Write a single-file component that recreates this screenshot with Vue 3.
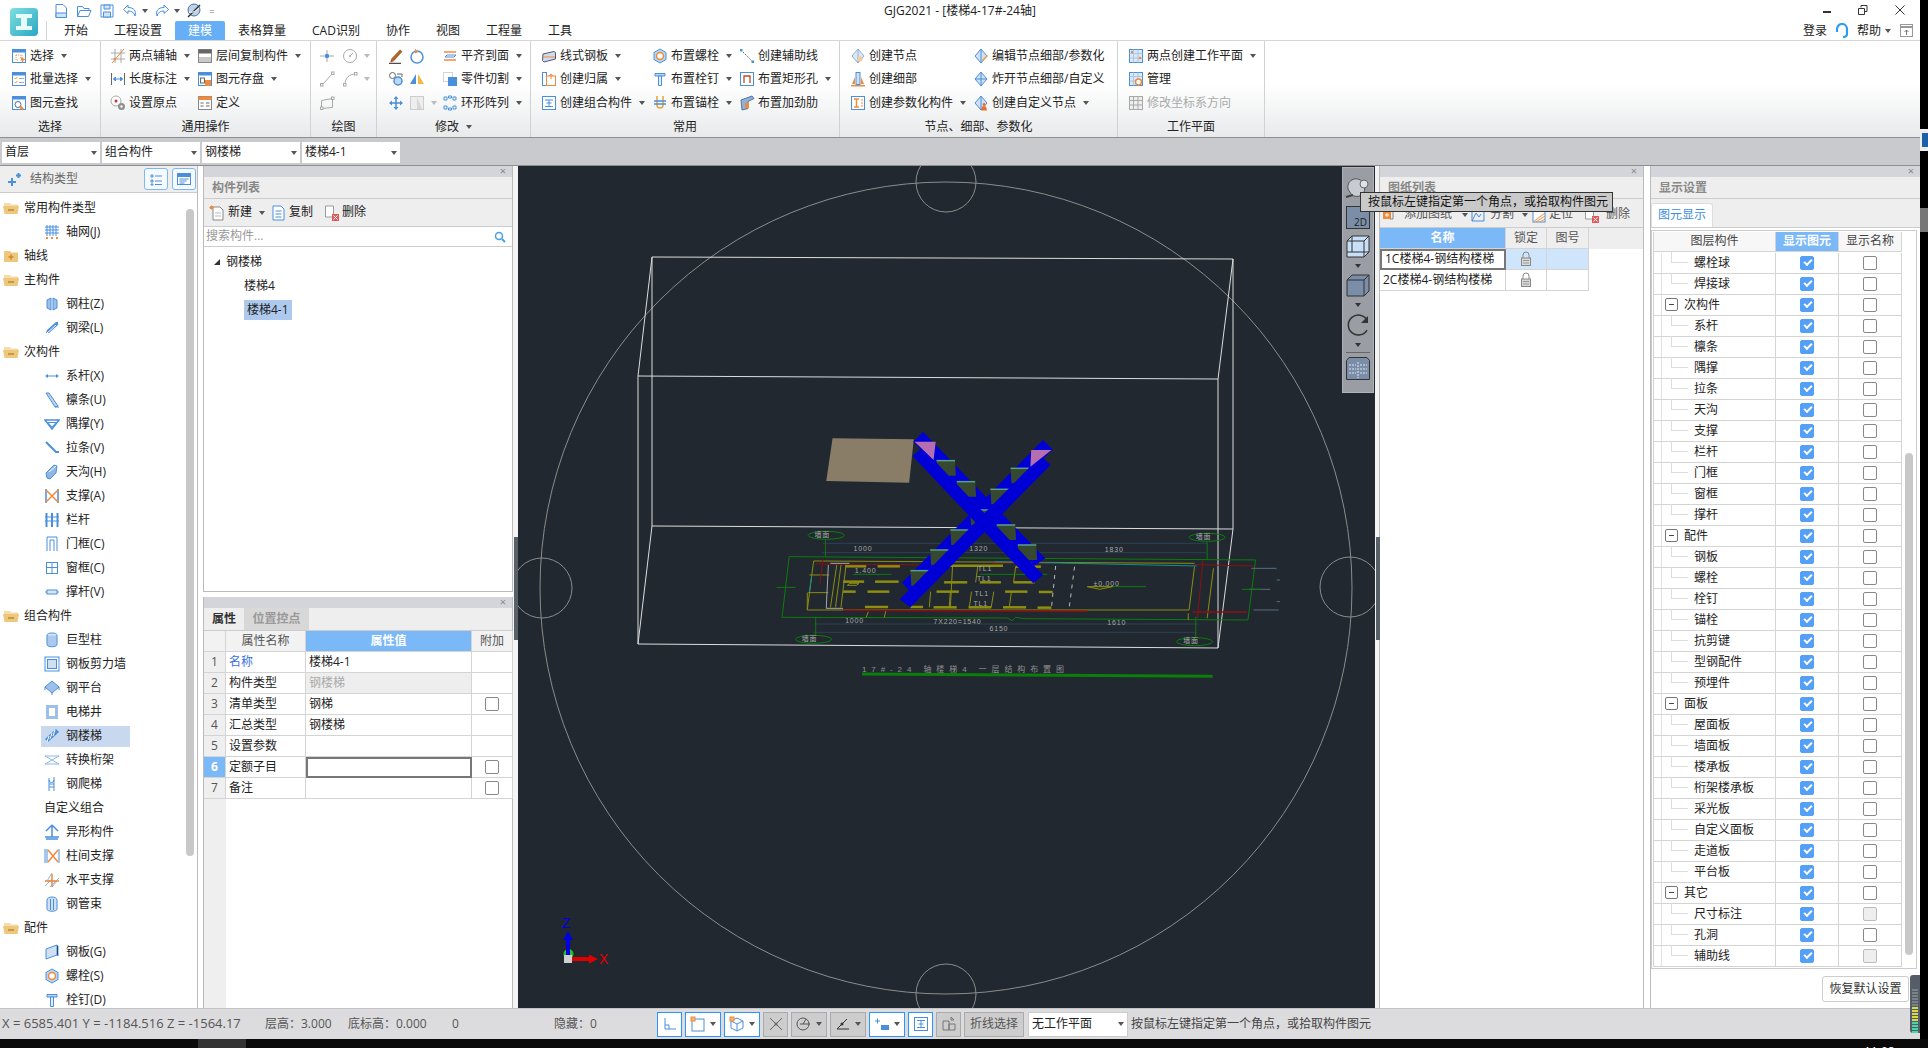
<script setup>
const B = '#4a8fdc'
const O = '#f08a3c'
const G = '#a9a9a9'
const D = '#666'

// every icon sits on a 16x16 grid
const icons = {
  doc: `<path d="M3 1.5h7l3.5 3.5v9.5H3z" fill="#fff" stroke="${B}"/><path d="M3 10h10.5v4.5H3z" fill="#cfe3f8" stroke="${B}"/>`,
  open: `<path d="M1.5 13.5V3.5h5l1.5 2h5v2M1.5 13.5h11l2.5-6H4z" fill="#fff" stroke="${B}"/>`,
  disk: `<path d="M2 2h12v12H2z" fill="#fff" stroke="${B}"/><path d="M5 2h6v4H5zM4.5 9h7v5h-7z" fill="#cfe3f8" stroke="${B}"/>`,
  undo: `<path d="M6 2L1.5 6.5 6 10.5V8c4 0 6 1.5 7 5 1.5-5-1-8.500-7-8.500z" fill="#fff" stroke="${B}"/>`,
  redo: `<path d="M10 2l4.500 4.500L10 10.500V8c-4 0-6 1.500-7 5-1.500-5 1-8.500 7-8.500z" fill="#fff" stroke="${B}"/>`,
  globe: `<circle cx="8" cy="7" r="6" fill="#bcd3ea" stroke="#4a6f9c"/><path d="M2 14L14 2" stroke="#333" stroke-width="1.500"/><path d="M3 9c4 1 7-1 10-4" stroke="#fff" fill="none"/>`,
  sel: `<rect x="1.500" y="1.500" width="13" height="13" fill="#fff" stroke="${B}"/><rect x="1.500" y="1.500" width="13" height="3" fill="${B}"/><path d="M5 7h6v5M5 7v5h3" stroke="${O}" stroke-dasharray="1 1" fill="none"/><path d="M9 9l6 2.500-2.500 1-1 2.500z" fill="${O}"/>`,
  batch: `<rect x="1.500" y="1.500" width="13" height="13" fill="#fff" stroke="${B}"/><rect x="1.500" y="1.500" width="13" height="3" fill="${B}"/><path d="M3.500 7l1 1 2-2M3.500 11l1 1 2-2" stroke="${O}" fill="none"/><path d="M8 7.500h5M8 11.500h5" stroke="${G}"/>`,
  find: `<rect x="1.500" y="1.500" width="13" height="13" fill="#fff" stroke="${B}"/><rect x="1.500" y="1.500" width="13" height="3" fill="${B}"/><circle cx="7" cy="9.500" r="3" fill="none" stroke="#4a6f9c"/><path d="M9 11.500l3 3" stroke="${O}" stroke-width="2.500"/>`,
  twopt: `<path d="M1 5h14M1 11h14M5 1v14M11 1v14" stroke="${G}"/><path d="M2 15L14 1" stroke="${O}"/><circle cx="5" cy="11" r="1.200" fill="${O}"/>`,
  dim: `<path d="M1.500 2v12M14.500 2v12" stroke="${D}"/><path d="M3.500 8h9M3.500 8l2-2v4zM12.500 8l-2-2v4z" stroke="${B}" fill="${B}"/>`,
  origin: `<circle cx="6" cy="6" r="5" fill="#fff" stroke="${G}"/><circle cx="6" cy="6" r="1.500" fill="#d03030"/><circle cx="11.500" cy="11.500" r="3.500" fill="#8f8f8f"/><circle cx="11.500" cy="11.500" r="1.200" fill="#fff"/>`,
  layers: `<rect x="1.500" y="1.500" width="13" height="13" fill="#fff" stroke="#888"/><rect x="1.500" y="1.500" width="13" height="4" fill="${D}"/><rect x="2" y="9" width="12" height="5" fill="#c9c9c9"/>`,
  savewin: `<rect x="1.500" y="1.500" width="13" height="13" fill="#fff" stroke="${B}"/><rect x="1.500" y="1.500" width="13" height="3" fill="${B}"/><rect x="3.500" y="7" width="4" height="5" fill="none" stroke="${D}"/><rect x="8" y="9" width="6" height="6" fill="${O}"/>`,
  defn: `<rect x="1.500" y="1.500" width="13" height="13" fill="#fff" stroke="#888"/><rect x="1.500" y="1.500" width="13" height="3.500" fill="${O}"/><path d="M3.500 8h3M3.500 11h3M9 8h3.500M9 11h3.500" stroke="${D}"/>`,
  gPoint: `<path d="M1 8h14M8 2v12" stroke="${G}"/><circle cx="8" cy="8" r="2.200" fill="${B}"/>`,
  gCircle: `<circle cx="8" cy="8" r="6.500" fill="none" stroke="${G}"/><path d="M8 8l3-3" stroke="${G}"/><circle cx="8" cy="8" r="1" fill="${G}"/>`,
  gLine: `<path d="M3 14L14 2" stroke="${G}"/><rect x="1.500" y="12.500" width="2.500" height="2.500" fill="#fff" stroke="${G}"/><rect x="12.500" y="1" width="2.500" height="2.500" fill="#fff" stroke="${G}"/>`,
  gArc: `<path d="M3 14C3 7 7 3 14 3" fill="none" stroke="${G}"/><rect x="1.500" y="12.500" width="2.500" height="2.500" fill="#fff" stroke="${G}"/><rect x="12.500" y="1.500" width="2.500" height="2.500" fill="#fff" stroke="${G}"/>`,
  gRect: `<path d="M2.500 5.500l11-2v9l-11 1z" fill="none" stroke="${G}"/><rect x="1.500" y="12" width="2.500" height="2.500" fill="#fff" stroke="${G}"/><rect x="12.500" y="2" width="2.500" height="2.500" fill="#fff" stroke="${G}"/>`,
  brush: `<path d="M3 11L12 1.500l2.500 2L6 13z" fill="#a8672e"/><path d="M3 11l3 2-3.500 1.500z" fill="#c0451c"/><path d="M1 15.300h12" stroke="#222"/>`,
  rotate: `<circle cx="8" cy="9" r="6" fill="none" stroke="${B}" stroke-width="1.500"/><path d="M6 .5v5l3.500-1.500z" fill="${O}"/>`,
  swap: `<circle cx="4.500" cy="4.500" r="3" fill="none" stroke="${D}"/><circle cx="10" cy="10" r="4" fill="#bcd7f2" stroke="${B}" stroke-width="1.500"/><path d="M9 3h5v3" stroke="${D}" fill="none"/>`,
  mirror: `<path d="M7 3v10H1z" fill="${B}"/><path d="M9 3v10h6z" fill="#f5b642"/>`,
  move: `<path d="M8 1l2.500 3h-5zM8 15l2.500-3h-5zM1 8l3-2.500v5zM15 8l-3-2.500v5z" fill="${B}"/><path d="M3 8h10M8 3v10" stroke="${B}" stroke-width="1.500"/>`,
  gSplit: `<rect x="1.500" y="1.500" width="13" height="13" fill="#eee" stroke="#ccc"/><path d="M8 2l5 12H8z" fill="#d6d6d6"/>`,
  align: `<path d="M2 4h12M2 12h12" stroke="${O}" stroke-width="1.500"/><path d="M5 7h9l-2 2H3z" fill="none" stroke="${B}"/>`,
  cut: `<rect x="1.500" y="1.500" width="9" height="9" fill="none" stroke="${G}" stroke-dasharray="1 1"/><path d="M6 6h9v9H6z" fill="${B}"/>`,
  ring: `<path d="M2 2h3v3H2zM11 2h3v3h-3zM2 11h3v3H2zM11 11h3v3h-3zM6.500 1h3v2h-3zM6.500 13h3v2h-3z" fill="none" stroke="${B}"/>`,
  plate: `<path d="M2 6l11-2.500 1.500 1v6.500L3 14 1.500 12.500z" fill="#cfdcec" stroke="#557"/><path d="M2 9h12" stroke="${O}"/>`,
  belong: `<rect x="1.500" y="1.500" width="4" height="13" fill="#fff" stroke="${B}"/><rect x="5.500" y="5" width="9" height="9.500" fill="#fff" stroke="${O}"/><path d="M10 3v5M8 5l2-2 2 2" stroke="${O}" fill="none"/>`,
  combo: `<rect x="1.500" y="1.500" width="13" height="13" fill="#fff" stroke="${B}"/><path d="M4 5h8M4 11.500h8M8 5v6.500M5.500 8h5" stroke="${B}"/>`,
  bolt: `<path d="M8 1l6 3.500v7L8 15l-6-3.500v-7z" fill="#bcd7f2" stroke="${B}"/><circle cx="8" cy="8" r="3.500" fill="#fff" stroke="${O}" stroke-width="1.500"/>`,
  guide: `<path d="M2 2l12 12" stroke="#555" stroke-dasharray="1.500 1.500"/><rect x="1" y="1" width="2.500" height="2.500" fill="${B}"/><rect x="12.500" y="12.500" width="2.500" height="2.500" fill="${B}"/>`,
  stud: `<path d="M3 2.500h10v2.500H3z" fill="#bcd7f2" stroke="${B}"/><path d="M6.500 5h3v9.500h-3z" fill="#e4eef9" stroke="${B}"/>`,
  hole: `<rect x="1.500" y="1.500" width="13" height="13" fill="#fff" stroke="${B}"/><path d="M5 12V5h6v7" fill="none" stroke="#c04a2a" stroke-width="1.300"/>`,
  anchor: `<path d="M5 1v9a3 3 0 0 0 6 0V1" fill="none" stroke="#e8a432" stroke-width="1.500"/><path d="M2 6h12M2 9h12" stroke="${B}" stroke-width="1.500"/>`,
  stiff: `<path d="M2 5l11-4 2 2.500-6 3v7L3 15z" fill="#8fb2d6" stroke="#55779c"/><path d="M6 8h4v5H6z" fill="${O}"/>`,
  nodeNew: `<path d="M8 1l6 7-6 7-6-7z" fill="#dbe7f4" stroke="#8fb0d4"/><path d="M8 1v14" stroke="#8fb0d4"/><circle cx="10" cy="11" r="2.500" fill="#f6c99f"/>`,
  nodeEd: `<path d="M8 1l6 7-6 7-6-7z" fill="#cfe0f2" stroke="${B}"/><path d="M8 1v14" stroke="${B}"/><path d="M9 12l5-5 1 1-5 5z" fill="#e8a432"/>`,
  nodeEx: `<path d="M8 1l6 7-6 7-6-7z" fill="#cfe0f2" stroke="${B}"/><path d="M8 1v14M2 8h12" stroke="${B}"/>`,
  nodeCu: `<path d="M8 1l6 7-6 7-6-7z" fill="#cfe0f2" stroke="${B}"/><path d="M8 1v14" stroke="${B}"/><path d="M11 8a1.500 1.500 0 1 0 .1 0zM8 15.500l1-4h4l1 4z" fill="#e8702a"/>`,
  detail: `<rect x="6" y="1.500" width="4" height="12" fill="#cfe0f2" stroke="${B}"/><path d="M1 15.500h14v-1.500H1zM2 13l3-7v7zM14 13l-3-7v7z" fill="${O}"/>`,
  param: `<rect x="1.500" y="1.500" width="13" height="13" fill="#fff" stroke="${B}"/><path d="M4 4h5M4 12h5M6.500 4v8" stroke="${O}" stroke-width="1.500"/><path d="M11 5h2M11 8h2M11 11h2" stroke="${O}"/>`,
  wp: `<rect x="1.500" y="1.500" width="13" height="13" fill="#dbe8f6" stroke="${B}"/><path d="M5.500 1.500v13M10 1.500v13M1.500 5.500h13M1.500 10h13" stroke="#a8c6e8"/><circle cx="4" cy="4" r="1.200" fill="${O}"/><circle cx="12" cy="10" r="1.200" fill="${O}"/>`,
  wpg: `<rect x="1.500" y="1.500" width="13" height="13" fill="#dbe8f6" stroke="${B}"/><path d="M5.500 1.500v13M10 1.500v13M1.500 5.500h13M1.500 10h13" stroke="#a8c6e8"/><circle cx="10.500" cy="11" r="3" fill="#fff" stroke="${O}" stroke-width="1.500"/>`,
  wpd: `<rect x="1.500" y="1.500" width="13" height="13" fill="#eee" stroke="${G}"/><path d="M5.500 1.500v13M10 1.500v13M1.500 5.500h13M1.500 10h13" stroke="${G}"/>`,
  plus: `<path d="M2 11h8M6 7v8M10 4.500h5M12.500 2v5" stroke="${B}" stroke-width="2"/>`,
  listV: `<path d="M3 4h2v2H3zM3 9h2v2H3zM3 13h2v1H3z" fill="none" stroke="${B}"/><path d="M7 5h7M7 10h7M7 13.500h7" stroke="${B}"/>`,
  winV: `<rect x="1.500" y="2.500" width="13" height="11" fill="#fff" stroke="${B}"/><rect x="1.500" y="2.500" width="13" height="3.500" fill="${B}"/><path d="M3.500 8h9M3.500 10h7M3.500 12h5" stroke="${B}"/>`,
  fOpen: `<path d="M1 3h6l1 1.500h7V6H1z" fill="#f6dca8"/><path d="M0 6h16l-1.500 8h-13z" fill="#efc77c"/><path d="M5 10h6" stroke="#b98a3a" stroke-width="1.500"/>`,
  fShut: `<path d="M1 3h6l1 1.500h7V14H1z" fill="#efc77c"/><path d="M5.500 9h5M8 6.500v5" stroke="#c98a2a" stroke-width="1.500"/>`,
  grid: `<path d="M3 1v11M6 1v11M9 1v11M12 1v11M1 3h14M1 6h14M1 9h14" stroke="${B}"/><path d="M2 14h2M7 14h2M12 14h2" stroke="${O}" stroke-width="2"/>`,
  col: `<path d="M3 4l4-2v12l-4-2zM9 2l4 2v8l-4 2z" fill="#9cc0e8" stroke="${B}"/>`,
  beam: `<path d="M3 10L12 2h2v3l-9 8H2z" fill="${B}"/><path d="M2 14l10-9" stroke="#fff"/>`,
  tie: `<path d="M1 8l3-2v1.500h8V6l3 2-3 2V8.500H4V10z" fill="${B}"/>`,
  purlin: `<path d="M2 1l3 0 9 13-3 1z" fill="#bcd3ee" stroke="${B}"/><path d="M11 15h4" stroke="${B}"/>`,
  corner: `<path d="M1 4h14L8 13z" fill="none" stroke="${B}" stroke-width="1.500"/><path d="M4 6.500h8L8 11z" fill="#fff" stroke="${B}"/>`,
  strap: `<path d="M2 2l10 10h3" fill="none" stroke="${B}" stroke-width="2"/>`,
  gutter: `<path d="M2 9l8-8 3 1-1 7-6 6-3-1z" fill="#8fb6e4" stroke="${B}"/><path d="M5 8l7-6" stroke="#fff"/>`,
  brace: `<path d="M2 1v14M14 1v14" stroke="${B}" stroke-width="1.500"/><path d="M2 2l12 12M14 2L2 14" stroke="${O}" stroke-width="1.500"/>`,
  rail: `<path d="M2.500 1v14M8 1v14M13.500 1v14" stroke="${B}" stroke-width="2"/><path d="M1 5h14M1 9h14" stroke="${B}"/>`,
  door: `<path d="M3 15V1h10v14M6 15V4h4v11" fill="none" stroke="${B}"/>`,
  wind: `<rect x="2.500" y="2.500" width="11" height="11" fill="none" stroke="${B}"/><path d="M8 2.500v11M2.500 7.500h11" stroke="${B}"/>`,
  strut: `<path d="M1 8h14" stroke="${B}"/><rect x="3" y="6" width="10" height="4" fill="#d7e5f6" stroke="${B}"/>`,
  cyl: `<ellipse cx="8" cy="3.500" rx="5" ry="2.500" fill="#d7e5f6" stroke="${B}"/><path d="M3 3.500v9c0 3 10 3 10 0v-9" fill="#a9c9ee" stroke="${B}"/>`,
  wall: `<rect x="1" y="1" width="14" height="14" fill="none" stroke="${B}"/><rect x="3.500" y="3.500" width="9" height="9" fill="#cfe0f2" stroke="${B}"/>`,
  plat: `<path d="M8 1l7 6-7 6-7-6z" fill="#9cc0e8" stroke="${B}"/><path d="M1 7v3M15 7v3M8 13v2" stroke="${B}"/>`,
  lift: `<rect x="2" y="1" width="12" height="14" fill="#9cc0e8"/><rect x="5" y="4" width="6" height="8" fill="#fff"/>`,
  stair: `<path d="M1 11L12 1l3 3L4 14z" fill="${B}"/><path d="M3 14l2-6M6 11l2-6M9 8l2-6" stroke="#fff"/>`,
  truss: `<path d="M1 4h14M1 12h14M1 4l7 4 7-4M1 12l7-4 7 4" stroke="#8fb6e4" fill="none"/>`,
  ladder: `<path d="M5 2v13M10 1v14" stroke="${B}"/><path d="M5 4a2 2 0 0 0 5 0M5 8h5M5 11h5" stroke="${B}" fill="none"/>`,
  odd: `<path d="M1 13h14M2 15h12" stroke="${B}" stroke-width="1.500"/><path d="M8 1v12M8 1L2 7M8 1l6 6" stroke="${B}" stroke-width="1.500" fill="none"/>`,
  colbr: `<path d="M1 1v14M3 1v14M15 1v14" stroke="${B}"/><path d="M4 2l10 12M14 2L4 14" stroke="${O}" stroke-width="1.500"/>`,
  hbr: `<path d="M1 14L8 7M6 15l9-9M8 1L3 9h10l-5 6" fill="none" stroke="#8fb6e4"/><path d="M1 9h14M8 2v13" stroke="${O}" stroke-width="1.500"/>`,
  tube: `<path d="M3 4c0-4 10-4 10 0v9c0 3-10 3-10 0z" fill="#cfe0f2" stroke="${B}"/><path d="M6.500 3v11M9.500 3v11" stroke="${B}"/>`,
  pl: `<path d="M2 5l11-4v10L2 15z" fill="#cfe0f2" stroke="${B}"/><path d="M13 1l1 1v10l-1-1" stroke="${B}"/>`,
  new: `<path d="M4 2h7l3 3v10H4z" fill="#fff" stroke="#888"/><path d="M6 8h6M6 11h6" stroke="#bbb"/><path d="M1 1l3 3M4 1L1 4M2.500.5v4M.5 2.500h4" stroke="${O}"/>`,
  copy: `<path d="M2 1h8l3 3v11H2z" fill="#fff" stroke="${B}"/><path d="M4.500 6h6M4.500 9h6M4.500 12h6" stroke="${B}"/>`,
  del: `<path d="M1.500 1h8v11h-8z" fill="#fff" stroke="#999"/><rect x="8" y="9" width="7" height="7" fill="#e05a5a"/><path d="M9.500 10.500l4 4M13.500 10.500l-4 4" stroke="#fff"/>`,
  addd: `<rect x="1" y="4" width="8" height="8" fill="${O}"/><path d="M3 8h4M5 6v4" stroke="#fff"/><path d="M11 2v10H8" fill="none" stroke="#888"/>`,
  split: `<path d="M2 3v11h12V3M2 14l4-8 3 4 2-3" fill="none" stroke="${B}"/>`,
  loc: `<rect x="2" y="4" width="12" height="11" fill="#fff" stroke="${B}"/><path d="M2 15l12-9M5 15l9-6M9 15l5-3" stroke="${O}"/>`,
  lock: `<path d="M5 7V4a3 3 0 0 1 6 0v3" fill="none" stroke="#888"/><rect x="3.500" y="7" width="9" height="7.500" fill="#d9d9d9" stroke="#888"/><path d="M5 9.500h6M5 12h6" stroke="#999"/>`,
  sb1: `<path d="M3 2v11h11M3 9h4v4" fill="none" stroke="${B}"/>`,
  sb2: `<rect x="2" y="3" width="12" height="12" fill="none" stroke="${B}"/><rect x="1" y="1" width="4" height="4" fill="#f6b26b" stroke="${O}"/>`,
  sb3: `<path d="M8 2l6 3v7l-6 3-6-3V5zM2 5l6 3 6-3M8 8v7" fill="none" stroke="${B}"/><rect x="1" y="1" width="4" height="4" fill="#f6b26b" stroke="${O}"/>`,
  sb4: `<path d="M2 2l12 12M14 2L2 14" stroke="#666"/><circle cx="8" cy="8" r="1.500" fill="#666"/>`,
  sb5: `<circle cx="7" cy="8" r="6" fill="none" stroke="#555"/><path d="M4 8h10M7 8l3-5" stroke="#555"/>`,
  sb6: `<path d="M2 13h12M2 13L12 3" stroke="#333"/><circle cx="7" cy="8" r="1.500" fill="#333"/>`,
  sb7: `<path d="M1 5h5M3.500 2.500v5" stroke="${B}"/><rect x="7" y="9" width="8" height="5" fill="${B}"/>`,
  sb8: `<rect x="1.500" y="1.500" width="13" height="13" fill="none" stroke="${B}"/><path d="M4 4.500h8M4 11.500h8M8 4.500v7M5.500 8h5" stroke="${B}"/>`,
  sb9: `<path d="M2 5h6v9H2zM8 8h6v6H8zM10 1l3 3h-3z" fill="none" stroke="#777"/>`,
}

const groups = [
  { label: '选择', w: 101, pl: 11, cols: [{ w: 90, items: [['sel', '选择', 1], ['batch', '批量选择', 1], ['find', '图元查找']] }] },
  { label: '通用操作', w: 210, pl: 9, cols: [
    { w: 87, items: [['twopt', '两点辅轴', 1], ['dim', '长度标注', 1], ['origin', '设置原点']] },
    { w: 110, items: [['layers', '层间复制构件', 1], ['savewin', '图元存盘', 1], ['defn', '定义']] },
  ] },
  { label: '绘图', w: 66, pl: 8, cols: [
    { w: 23, items: [['gPoint', ''], ['gLine', ''], ['gRect', '']] },
    { w: 30, items: [['gCircle', '', 2], ['gArc', '', 2]] },
  ] },
  { label: '修改', more: true, w: 154, pl: 11, cols: [
    { w: 21, items: [['brush', ''], ['swap', ''], ['move', '']] },
    { w: 33, items: [['rotate', ''], ['mirror', ''], ['gSplit', '', 2]] },
    { w: 85, items: [['align', '平齐到面', 1], ['cut', '零件切割', 1], ['ring', '环形阵列', 1]] },
  ] },
  { label: '常用', w: 309, pl: 10, cols: [
    { w: 111, items: [['plate', '线式钢板', 1], ['belong', '创建归属', 1], ['combo', '创建组合构件', 1]] },
    { w: 87, items: [['bolt', '布置螺栓', 1], ['stud', '布置栓钉', 1], ['anchor', '布置锚栓', 1]] },
    { w: 95, items: [['guide', '创建辅助线'], ['hole', '布置矩形孔', 1], ['stiff', '布置加劲肋']] },
  ] },
  { label: '节点、细部、参数化', w: 278, pl: 10, cols: [
    { w: 123, items: [['nodeNew', '创建节点'], ['detail', '创建细部'], ['param', '创建参数化构件', 1]] },
    { w: 140, items: [['nodeEd', '编辑节点细部/参数化'], ['nodeEx', '炸开节点细部/自定义'], ['nodeCu', '创建自定义节点', 1]] },
  ] },
  { label: '工作平面', w: 147, pl: 10, cols: [
    { w: 130, items: [['wp', '两点创建工作平面', 1], ['wpg', '管理'], ['wpd', '修改坐标系方向', 0, true]] },
  ] },
]

const tabs = ['开始', '工程设置', '建模', '表格算量', 'CAD识别', '协作', '视图', '工程量', '工具']
const combos = ['首层', '组合构件', '钢楼梯', '楼梯4-1']

const tree = [
  { g: 1, t: '常用构件类型', i: 'fOpen' }, { t: '轴网(J)', i: 'grid' },
  { g: 1, t: '轴线', i: 'fShut' },
  { g: 1, t: '主构件', i: 'fOpen' }, { t: '钢柱(Z)', i: 'col' }, { t: '钢梁(L)', i: 'beam' },
  { g: 1, t: '次构件', i: 'fOpen' }, { t: '系杆(X)', i: 'tie' }, { t: '檩条(U)', i: 'purlin' }, { t: '隅撑(Y)', i: 'corner' },
  { t: '拉条(V)', i: 'strap' }, { t: '天沟(H)', i: 'gutter' }, { t: '支撑(A)', i: 'brace' }, { t: '栏杆', i: 'rail' },
  { t: '门框(C)', i: 'door' }, { t: '窗框(C)', i: 'wind' }, { t: '撑杆(V)', i: 'strut' },
  { g: 1, t: '组合构件', i: 'fOpen' }, { t: '巨型柱', i: 'cyl' }, { t: '钢板剪力墙', i: 'wall' }, { t: '钢平台', i: 'plat' },
  { t: '电梯井', i: 'lift' }, { t: '钢楼梯', i: 'stair', sel: 1 }, { t: '转换桁架', i: 'truss' }, { t: '钢爬梯', i: 'ladder' },
  { t: '自定义组合' }, { t: '异形构件', i: 'odd' }, { t: '柱间支撑', i: 'colbr' }, { t: '水平支撑', i: 'hbr' }, { t: '钢管束', i: 'tube' },
  { g: 1, t: '配件', i: 'fOpen' }, { t: '钢板(G)', i: 'pl' }, { t: '螺栓(S)', i: 'bolt' }, { t: '栓钉(D)', i: 'stud' },
]

const props = [
  { n: '名称', v: '楼梯4-1', link: 1 },
  { n: '构件类型', v: '钢楼梯', off: 1 },
  { n: '清单类型', v: '钢梯', chk: 1 },
  { n: '汇总类型', v: '钢楼梯' },
  { n: '设置参数', v: '' },
  { n: '定额子目', v: '', cur: 1, chk: 1 },
  { n: '备注', v: '', chk: 1 },
]

const sheets = ['1C楼梯4-钢结构楼梯', '2C楼梯4-钢结构楼梯']

const layerGroups = [
  [null, ['螺栓球', '焊接球']],
  ['次构件', ['系杆', '檩条', '隅撑', '拉条', '天沟', '支撑', '栏杆', '门框', '窗框', '撑杆']],
  ['配件', ['钢板', '螺栓', '栓钉', '锚栓', '抗剪键', '型钢配件', '预埋件']],
  ['面板', ['屋面板', '墙面板', '楼承板', '桁架楼承板', '采光板', '自定义面板', '走道板', '平台板']],
  ['其它', ['尺寸标注', '孔洞', '辅助线']],
]
const layers = layerGroups.flatMap(([g, kids]) => [
  ...(g ? [{ t: g, g: true }] : []),
  ...kids.map((t, i) => ({ t, last: i === kids.length - 1, off: t === '尺寸标注' || t === '辅助线' })),
])

const statusBtns = [
  { w: 25, i: 'sb1', on: 1 }, { w: 36, i: 'sb2', on: 1, a: 1 }, { w: 36, i: 'sb3', on: 1, a: 1 },
  { w: 25, i: 'sb4' }, { w: 36, i: 'sb5', a: 1 }, { w: 36, i: 'sb6', a: 1 },
  { w: 36, i: 'sb7', on: 1, a: 1 }, { w: 25, i: 'sb8', on: 1 }, { w: 25, i: 'sb9' },
]

// the plan drawing was read off a crop, so its numbers are in that crop's units
const zx = (x) => 620 + x / 2.376
const zy = (y) => 400 + y / 3

const yellow = [
  [460, 483, 445, 630], [445, 630, 1352, 630], [1365, 500, 1352, 630], [460, 483, 1365, 490],
  [537, 495, 525, 622], [515, 495, 500, 622], [525, 495, 512, 622], [790, 500, 785, 620],
  [738, 575, 735, 622], [785, 575, 782, 622], [835, 575, 830, 622], [888, 575, 882, 622], [930, 575, 925, 622],
  [850, 500, 845, 547], [940, 500, 935, 547], [1410, 505, 1395, 655], [1350, 640, 1350, 660],
  [590, 635, 585, 652], [632, 630, 628, 652], [450, 525, 497, 525], [447, 578, 495, 578],
  [445, 578, 445, 630],
]
const yellowThick = [
  [535, 585, 499], [612, 665, 499], [780, 910, 497], [940, 1000, 500],
  [530, 580, 545], [606, 662, 545], [770, 825, 547], [855, 905, 547], [935, 985, 547],
  [530, 560, 575], [588, 640, 575], [752, 805, 575], [915, 968, 575], [995, 1028, 576],
  [582, 637, 621], [690, 720, 621], [745, 800, 622], [828, 882, 622], [910, 965, 622], [992, 1025, 623],
]
const steps = [[752, 182], [800, 245], [880, 268], [928, 205], [832, 330], [895, 375], [945, 435], [785, 390], [737, 450], [690, 512]]
const bubbles = [[490, 406], [1395, 412], [460, 718], [1365, 725]]
const dimLabels = [
  ['1000', 555, 452], ['1320', 830, 454], ['1830', 1152, 456], ['1.400', 558, 520], ['±0.000', 1125, 557],
  ['TL1', 850, 513], ['TL1', 848, 544], ['TL1', 842, 587], ['TL1', 840, 617],
  ['1000', 535, 669], ['7X220=1540', 745, 671], ['1610', 1158, 674], ['6150', 878, 693],
  ['墙面', 462, 411], ['墙面', 1368, 417], ['墙面', 432, 722], ['墙面', 1338, 729],
].map(([t, x, y]) => ({ t, x: zx(x), y: zy(y) }))
const meter = Array.from({ length: 15 }, (_, i) => (i < 6 ? '#7b8188' : i < 11 ? '#d8d84a' : '#45d8a8'))
</script>

<template>
  <div class="app">
    <div class="win">
      <header class="head">
        <div class="logo-col">
          <div class="logo">
            <svg width="28" height="28" viewBox="0 0 28 28"><path d="M6 6h16v4h-5v8h5v4H6v-4h5v-8H6z" fill="#e8fbfb" /></svg>
          </div>
        </div>
        <div class="head-main">
          <div class="qat">
            <svg v-for="n in ['doc', 'open', 'disk']" :key="n" class="ic" viewBox="0 0 16 16" v-html="icons[n]"></svg>
            <svg class="ic" viewBox="0 0 16 16" v-html="icons.undo"></svg><i class="arrow qa"></i>
            <svg class="ic" viewBox="0 0 16 16" v-html="icons.redo"></svg><i class="arrow qa"></i>
            <svg class="ic" viewBox="0 0 16 16" v-html="icons.globe"></svg>
            <span class="qat-more">=</span>
          </div>
          <div class="tabrow">
            <div class="tabs">
              <div v-for="t in tabs" :key="t" class="tab" :class="{ on: t === '建模' }">{{ t }}</div>
            </div>
            <div class="account">
              <span>登录</span>
              <svg width="14" height="16" viewBox="0 0 14 16"><path d="M2 9V6a5 5 0 0 1 10 0v5c0 2-1.500 3-4 3" fill="none" stroke="#2f9bf0" stroke-width="2.200" /></svg>
              <span class="help">帮助</span><i class="arrow"></i>
              <svg class="pin" width="13" height="13" viewBox="0 0 13 13"><rect x=".5" y=".5" width="12" height="12" fill="#fff" stroke="#999" /><path d="M1 3h11" stroke="#999" stroke-width="2" /><path d="M6.500 11V6M4.500 8l2-2 2 2" fill="none" stroke="#777" /></svg>
            </div>
          </div>
        </div>
        <div class="title">GJG2021 - [楼梯4-17#-24轴]</div>
        <div class="winbtns">
          <span class="wmin"></span>
          <svg width="10" height="10" viewBox="0 0 10 10"><path d="M3 2.500V.5h6v6H7M.5 3.500h6v6h-6z" fill="none" stroke="#333" /></svg>
          <svg width="10" height="10" viewBox="0 0 10 10"><path d="M.5.5l9 9M9.500.5l-9 9" stroke="#333" /></svg>
        </div>
      </header>

      <div class="ribbon">
        <section v-for="g in groups" :key="g.label" class="rgroup" :style="{ width: g.w + 'px' }">
          <div class="rbody" :style="{ paddingLeft: g.pl + 'px' }">
            <div v-for="(c, ci) in g.cols" :key="ci" class="rcol" :style="{ width: c.w + 'px' }">
              <div v-for="it in c.items" :key="it[0]" class="ritem" :class="{ dim: it[3] }">
                <svg class="ic" viewBox="0 0 16 16" v-html="icons[it[0]]"></svg>
                <span v-if="it[1]">{{ it[1] }}</span>
                <i v-if="it[2]" class="arrow" :class="{ pale: it[2] === 2 }"></i>
              </div>
            </div>
          </div>
          <div class="rlabel">{{ g.label }}<i v-if="g.more" class="arrow more"></i></div>
        </section>
      </div>

      <div class="combos">
        <div v-for="c in combos" :key="c" class="combo">{{ c }}<i class="arrow"></i></div>
      </div>

      <main class="main">
        <aside class="left">
          <div class="left-head">
            <svg class="ic" viewBox="0 0 16 16" v-html="icons.plus"></svg>
            <span class="left-title">结构类型</span>
            <button class="vbtn"><svg class="ic" viewBox="0 0 16 16" v-html="icons.listV"></svg></button>
            <button class="vbtn"><svg class="ic" viewBox="0 0 16 16" v-html="icons.winV"></svg></button>
          </div>
          <div class="ltree">
            <div v-for="r in tree" :key="r.t" class="lrow" :class="{ grp: r.g, kid: !r.g }">
              <div class="lrow-in" :class="{ sel: r.sel }">
                <svg v-if="r.i" class="ic" viewBox="0 0 16 16" v-html="icons[r.i]"></svg>
                <span>{{ r.t }}</span>
              </div>
            </div>
            <div class="vscroll lscroll"></div>
          </div>
        </aside>

        <div class="midcol">
          <section class="panel list">
            <div class="pbar">×</div>
            <div class="ptitle">构件列表</div>
            <div class="ptools mid-tools">
              <span class="tool t-new"><svg class="ic" viewBox="0 0 16 16" v-html="icons.new"></svg>新建<i class="arrow"></i></span>
              <span class="tool"><svg class="ic" viewBox="0 0 16 16" v-html="icons.copy"></svg>复制</span>
              <span class="tool"><svg class="ic" viewBox="0 0 16 16" v-html="icons.del"></svg>删除</span>
            </div>
            <div class="search">
              <span>搜索构件...</span>
              <svg width="12" height="12" viewBox="0 0 12 12"><circle cx="5" cy="5" r="3.500" fill="none" stroke="#4aa0e0" stroke-width="1.500" /><path d="M8 8l3 3" stroke="#4aa0e0" stroke-width="2" /></svg>
            </div>
            <div class="clist">
              <div class="crow"><i class="tri"></i>钢楼梯</div>
              <div class="crow c2">楼梯4</div>
              <div class="crow c2"><span class="csel">楼梯4-1</span></div>
            </div>
          </section>
          <section class="panel props">
            <div class="pbar">×</div>
            <div class="ptabs">
              <div class="ptab on">属性</div>
              <div class="ptab">位置控点</div>
            </div>
            <div class="ptable">
              <div class="pc hd"></div><div class="pc hd ctr">属性名称</div><div class="pc hd ctr act">属性值</div><div class="pc hd ctr">附加</div>
              <template v-for="(p, i) in props" :key="p.n">
                <div class="pc num" :class="{ act: p.cur }">{{ i + 1 }}</div>
                <div class="pc" :class="{ link: p.link }">{{ p.n }}</div>
                <div class="pc" :class="{ off: p.off, cur: p.cur }">{{ p.v }}</div>
                <div class="pc ctr"><i v-if="p.chk" class="cb"></i></div>
              </template>
            </div>
            <div class="pfill"></div>
          </section>
        </div>

        <div class="gutter"><span class="handle"></span></div>

        <div class="canvas">
          <svg class="cad" width="857" height="842" viewBox="518 166 857 842">
            <g fill="none" stroke="#8c8c8c">
              <circle cx="946" cy="588" r="406" />
              <circle cx="946" cy="182" r="30" />
              <circle cx="946" cy="994" r="30" />
              <circle cx="542" cy="588" r="30" />
              <circle cx="1350" cy="587" r="30" />
            </g>
            <g fill="none" stroke="#dcdcdc">
              <path d="M652 257L1233 259L1218 379L638 376Z" />
              <path d="M652 257V526M1233 259V529M638 376V644M1218 379V648" />
              <path d="M652 526L1233 529L1218 648L638 644Z" />
            </g>
            <g transform="translate(620 400) scale(.4209 .3333)" fill="none" class="plan">
              <path d="M402 470L1510 480L1492 660L960 656L940 652L932 662L920 654L385 652Z" stroke="#0b7d0b" />
              <path d="M1500 505h60M1505 630h60M1495 568h50M1560 540h8M1560 605h8" stroke="#5a6f80" />
              <path d="M1478 568h45M372 562h45" stroke="#0b7d0b" />
              <path d="M482 430H1395M480 458H1392M462 672H1375M458 697H1370" stroke="#2c4256" />
              <path d="M488 418V470M1395 425V480M465 650V705M1368 650V712" stroke="#0b7d0b" />
              <line v-for="(l, i) in yellow" :key="i" :x1="l[0]" :y1="l[1]" :x2="l[2]" :y2="l[3]" stroke="#8d8d10" />
              <line v-for="(l, i) in yellowThick" :key="'t' + i" :x1="l[0]" :y1="l[2]" :x2="l[1]" :y2="l[2]" stroke="#8d8d10" stroke-width="2.500" />
              <path d="M465 492L710 494M885 490H1020M1365 494L1505 498M482 478L475 550M1385 480L1372 655" stroke="#8a1010" />
              <path d="M530 631L1110 634M1360 636L1490 636" stroke="#8a1010" stroke-width="1.500" />
              <path d="M890 485L1370 498" stroke="#118f8f" />
              <path d="M455 530L450 575" stroke="#118f8f" />
              <path d="M495 495L490 625H530M500 490H545" stroke="#a8a8a8" />
              <path d="M1035 498L1025 625M1080 500L1067 625" stroke="#bbb" stroke-dasharray="4 5" />
              <path d="M555 523h90M1125 560h125M855 523H1015" stroke="#0b7d0b" />
              <path d="M540 556l6-6h22l-6 6zM1110 560h60l-30 8z" stroke="#8d8d10" />
              <ellipse v-for="b in bubbles" :key="b[0]" :cx="b[0]" :cy="b[1]" rx="43" ry="12" stroke="#0b7d0b" />
              <path d="M575 822L1408 829" stroke="#0b7d0b" stroke-width="3" />
              <path d="M490 243L505 115L698 118L687 248Z" fill="#8a7d68" />
              <polygon points="697,125 720,95 1010,475 985,497" fill="#0000d6" />
              <polygon points="670,548 1005,120 1028,148 690,575" fill="#0000d6" />
              <g v-for="s in steps" :key="s[0]">
                <path :d="`M${s[0]} ${s[1]}h44l2 45h-44z`" fill="#36482f" />
                <path :d="`M${s[0]} ${s[1]}h44`" stroke="#57a08c" stroke-width="1.500" />
              </g>
              <polygon points="695,168 718,143 1005,525 982,550" fill="#0000d6" />
              <polygon points="665,598 1000,167 1023,195 690,622" fill="#0000d6" />
              <path d="M700 125h50l-5 55zM977 150h48l-50 50z" fill="#b56fb0" />
            </g>
            <g class="dims">
              <text v-for="(d, i) in dimLabels" :key="i" :x="d.x" :y="d.y">{{ d.t }}</text>
            </g>
            <text class="cadtitle" x="862" y="672" textLength="202" lengthAdjust="spacing">17#-24 轴楼梯4 一层结构布置图</text>
            <g>
              <circle cx="568.500" cy="954" r="5" fill="#22c02e" />
              <path d="M568 955V938" stroke="#0000e0" stroke-width="4" />
              <path d="M568 931l-5 9h10z" fill="#0000e0" />
              <path d="M570 959H590" stroke="#e00000" stroke-width="4" />
              <path d="M598 959l-9-4.500v9z" fill="#e00000" />
              <rect x="564" y="955" width="8" height="8" fill="#d0d0d0" />
              <text class="ax z" x="562" y="928">Z</text>
              <text class="ax x" x="599" y="964">X</text>
            </g>
          </svg>
          <div class="viewbar">
            <svg class="vglobe" width="26" height="20" viewBox="0 0 26 20"><path d="M3 11a8 8 0 0 1 16-4 8 8 0 0 1-13 9z" fill="#c8ccd2" stroke="#555" /><circle cx="19" cy="6" r="4" fill="#dfe3e8" stroke="#666" /><path d="M1 19l7-2" stroke="#444" stroke-width="2" /></svg>
            <div class="v2d">2D</div>
            <svg class="vcube" width="24" height="23" viewBox="0 0 24 23"><path d="M1 6L6 1h17v16l-5 5H1z" fill="#c7e0f7" stroke="#333" /><path d="M1 6h17v16M18 6l5-5M6 1v16H1M6 17h17" fill="none" stroke="#333" /></svg>
            <i class="arrow vdown"></i>
            <svg class="vcube" width="24" height="23" viewBox="0 0 24 23"><path d="M1 6L6 1h17v16l-5 5H1z" fill="#7a8ea8" stroke="#333" /><path d="M1 6h17v16M18 6l5-5" fill="none" stroke="#333" /></svg>
            <i class="arrow vdown"></i>
            <svg class="vcube" width="24" height="24" viewBox="0 0 24 24"><path d="M21 17a10 10 0 1 1 0-10" fill="none" stroke="#333" stroke-width="1.500" /><path d="M22 3v7h-7z" fill="#333" /></svg>
            <i class="arrow vdown"></i>
            <span class="vsep"></span>
            <svg class="vgrid" width="24" height="23" viewBox="0 0 24 23"><path d="M.5 3.500L3 .5h18l2.500 3v19H.5z" fill="#7a8ea8" stroke="#333" /><path d="M12 5v16M3 8h7M14 8h7M3 12h7M14 12h7M3 16h7M14 16h7" stroke="#dfe6ee" stroke-dasharray="2 1" /></svg>
          </div>
        </div>

        <div class="gutter g2"><span class="handle"></span></div>

        <section class="panel sheets">
          <div class="pbar">×</div>
          <div class="ptitle">图纸列表</div>
          <div class="ptools sheet-tools">
            <span class="st s1"><svg class="ic" viewBox="0 0 16 16" v-html="icons.addd"></svg>添加图纸<i class="arrow"></i></span>
            <span class="st s2"><svg class="ic" viewBox="0 0 16 16" v-html="icons.split"></svg>分割<i class="arrow"></i></span>
            <span class="st s3"><svg class="ic" viewBox="0 0 16 16" v-html="icons.loc"></svg>定位</span>
            <span class="st"><svg class="ic" viewBox="0 0 16 16" v-html="icons.del"></svg>删除</span>
          </div>
          <div class="stable">
            <div class="sc shd act">名称</div><div class="sc shd">锁定</div><div class="sc shd">图号</div><div class="sfill"></div>
            <template v-for="(s, i) in sheets" :key="s">
              <div class="sc name" :class="{ cur: i === 0 }">{{ s }}</div>
              <div class="sc" :class="{ pick: i === 0 }"><svg class="ic" viewBox="0 0 16 16" v-html="icons.lock"></svg></div>
              <div class="sc" :class="{ pick: i === 0 }"></div>
              <div></div>
            </template>
          </div>
        </section>

        <section class="panel display">
          <div class="pbar">×</div>
          <div class="ptitle">显示设置</div>
          <div class="dtabs"><div class="dtab">图元显示</div></div>
          <div class="dframe">
            <div class="dgrid">
              <div class="dc dh">图层构件</div><div class="dc dh act">显示图元</div><div class="dc dh">显示名称</div>
              <template v-for="l in layers" :key="l.t">
                <div class="dc lab" :class="{ isg: l.g, kid: !l.g, last: l.last }">
                  <span v-if="l.g" class="box"></span>{{ l.t }}
                </div>
                <div class="dc"><i class="cb on"></i></div>
                <div class="dc"><i class="cb" :class="{ off: l.off }"></i></div>
              </template>
            </div>
            <div class="vscroll dscroll"></div>
          </div>
          <div class="dfoot"><button class="reset">恢复默认设置</button></div>
        </section>
      </main>

      <footer class="status">
        <span class="s-xyz">X = 6585.401 Y = -1184.516 Z = -1564.17</span>
        <span class="s-h">层高：3.000</span>
        <span class="s-b">底标高：0.000</span>
        <span class="s-n">0</span>
        <span class="s-hide">隐藏：0</span>
        <button v-for="(b, i) in statusBtns" :key="i" class="sb" :class="{ on: b.on }" :style="{ width: b.w + 'px' }">
          <svg class="ic" viewBox="0 0 16 16" v-html="icons[b.i]"></svg><i v-if="b.a" class="arrow"></i>
        </button>
        <button class="sb txt">折线选择</button>
        <div class="plane">无工作平面<i class="arrow"></i></div>
        <span class="hint">按鼠标左键指定第一个角点，或拾取构件图元</span>
      </footer>
    </div>

    <div class="taskbar">
      <span class="task-on"></span>
      <span class="clock">11:08</span>
    </div>

    <div class="tooltip">按鼠标左键指定第一个角点，或拾取构件图元</div>
    <div class="edge e1"><span></span></div>
    <div class="edge e2"></div>
    <div class="meter"><i v-for="(c, i) in meter" :key="i" :style="{ background: c }"></i></div>
  </div>
</template>

<style>
html, body { margin: 0; background: #000; overflow: hidden; }
</style>

<style scoped>
.app {
  position: relative;
  width: 1928px;
  height: 1048px;
  overflow: hidden;
  background: #000;
  color: #222;
  font: 12px/1.2 "Open Sans", "Noto Sans CJK SC", sans-serif;
}
i { font-style: normal; }
.win { display: flex; flex-direction: column; width: 1920px; height: 1039px; background: #fff; }
.ic { width: 16px; height: 16px; flex: none; }
.arrow {
  display: inline-block;
  flex: none;
  width: 0;
  height: 0;
  margin-left: 4px;
  border: 3px solid transparent;
  border-top: 4px solid #555;
  border-bottom: 0;
}
.arrow.pale { border-top-color: #bbb; margin-left: 3px; }

.head { position: relative; display: flex; height: 41px; border-bottom: 1px solid #d6d6d6; box-sizing: border-box; }
.logo-col { width: 50px; flex: none; padding: 8px 0 0 10px; box-sizing: border-box; }
.logo { width: 28px; height: 28px; border-radius: 4px; background: linear-gradient(135deg, #7fe0de, #2aa6c4); }
.head-main { flex: 1; min-width: 0; display: flex; flex-direction: column; }
.qat { display: flex; align-items: center; gap: 7px; height: 21px; padding-left: 3px; }
.arrow.qa { margin: 0 -1px 0 -3px; }
.qat-more { color: #777; font-size: 10px; }
.tabrow { display: flex; justify-content: space-between; height: 19px; border-left: 1px solid #d6d6d6; margin-left: -4px; padding-left: 4px; }
.tabs { display: flex; }
.tab { padding: 0 13px; line-height: 19px; }
.tab.on { background: #66aef5; color: #fff; border-radius: 2px 2px 0 0; }
.account { display: flex; align-items: center; padding-right: 7px; }
.account span { line-height: 19px; }
.account svg { margin-left: 8px; }
.account .help { margin-left: 8px; }
.account .pin { margin-left: 9px; }
.title { position: absolute; left: 0; right: 0; top: 4px; text-align: center; pointer-events: none; }
.winbtns { position: absolute; right: 15px; top: 5px; display: flex; align-items: center; gap: 27px; }
.wmin { width: 8px; height: 2px; margin-top: 4px; background: #333; }

.ribbon { display: flex; height: 97px; box-sizing: border-box; border-bottom: 1px solid #8f8f8f; background: linear-gradient(#fff 45%, #e8eaeb); }
.rgroup { display: flex; flex-direction: column; flex: none; box-sizing: border-box; border-right: 1px solid #d0d3d5; }
.rbody { display: flex; flex: 1; padding-top: 3px; }
.rcol { flex: none; }
.ritem { display: flex; align-items: center; gap: 3px; height: 23.500px; white-space: nowrap; }
.ritem.dim { color: #aaa; }
.rlabel { height: 20px; line-height: 20px; text-align: center; }
.arrow.more { margin-left: 7px; vertical-align: 2px; }

.combos { display: flex; gap: 2px; height: 28px; box-sizing: border-box; padding: 4px 0 2px 2px; background: #c8cacd; border-bottom: 1px solid #8f8f8f; }
.combo { display: flex; align-items: center; justify-content: space-between; width: 98px; padding: 0 3px; box-sizing: border-box; background: #fff; font-size: 12px; }

.main { display: flex; flex: 1; min-height: 0; background: #fff; }
.left { width: 198px; flex: none; box-sizing: border-box; border-right: 1px solid #bbb; display: flex; flex-direction: column; margin-right: 5px; }
.left-head { display: flex; align-items: center; height: 27px; flex: none; box-sizing: border-box; padding-left: 6px; background: #eee; border-bottom: 1px solid #ccc; }
.left-title { flex: 1; margin-left: 8px; color: #666; }
.vbtn { display: flex; align-items: center; justify-content: center; width: 24px; height: 22px; padding: 0; margin-right: 4px; background: #f6f9fd; border: 1px solid #7ab8f8; border-radius: 3px; }
.vbtn:last-child { margin-right: 1px; }
.ltree { position: relative; flex: 1; min-height: 0; overflow: hidden; padding-top: 3px; }
.lrow { display: flex; align-items: center; height: 24px; }
.lrow-in { display: flex; align-items: center; }
.grp .lrow-in { gap: 5px; padding-left: 3px; }
.kid .lrow-in { gap: 6px; margin-left: 41px; padding-left: 3px; height: 21px; width: 86px; }
.lrow-in.sel { background: #c8d8ef; }
.vscroll { position: absolute; width: 8px; background: #c8c8c8; border-radius: 4px; }
.lscroll { left: 186px; top: 16px; height: 647px; }

.midcol { display: flex; flex-direction: column; gap: 5px; width: 310px; flex: none; }
.panel { display: flex; flex-direction: column; box-sizing: border-box; border-left: 1px solid #bbb; border-right: 1px solid #bbb; }
.list { height: 426px; border-bottom: 1px solid #bbb; }
.props { flex: 1; min-height: 0; }
.pbar { height: 11px; flex: none; padding-right: 6px; background: #d4d5da; color: #888; font-size: 11px; line-height: 10px; text-align: right; }
.ptitle { height: 22px; flex: none; box-sizing: border-box; padding-left: 8px; line-height: 21px; background: #eee; border-bottom: 1px solid #ccc; color: #888; font-weight: 700; }
.ptools { display: flex; align-items: center; flex: none; height: 28px; background: #eee; box-sizing: border-box; border-bottom: 1px solid #ccc; }
.mid-tools { padding-left: 5px; }
.tool { display: flex; align-items: center; gap: 2px; margin-right: 11px; }
.t-new { gap: 3px; margin-right: 6px; }
.search { display: flex; align-items: center; justify-content: space-between; height: 20px; flex: none; box-sizing: border-box; padding: 0 6px 0 2px; border-bottom: 1px solid #ccc; color: #999; }
.clist { flex: 1; padding-top: 3px; }
.crow { display: flex; align-items: center; height: 24px; padding-left: 10px; }
.crow.c2 { padding-left: 40px; }
.tri { width: 0; height: 0; margin-right: 6px; border-bottom: 6px solid #333; border-left: 6px solid transparent; }
.csel { display: block; padding: 3px 3px; background: #adcaee; }

.ptabs { display: flex; height: 23px; flex: none; box-sizing: border-box; background: #eee; border-bottom: 1px solid #ccc; }
.ptab { display: flex; align-items: center; justify-content: center; color: #999; background: #d8d8d8; width: 65px; font-weight: 700; }
.ptab.on { width: 40px; background: #eee; color: #333; }
.ptable { display: grid; grid-template-columns: 22px 80px 166px 41px; grid-auto-rows: 21px; flex: none; }
.pc { display: flex; align-items: center; box-sizing: border-box; padding-left: 3px; border-right: 1px solid #d4d4d4; border-bottom: 1px solid #d4d4d4; }
.ctr { justify-content: center; padding: 0; }
.hd { background: #f2f2f2; justify-content: center; padding: 0; color: #555; }
.pc.act { background: #7ab8f8; color: #fff; font-weight: 700; }
.num { justify-content: center; padding: 0; background: #efefef; color: #555; }
.link { color: #3a6fe0; }
.off { background: #eee; color: #aaa; }
.cur { border: 2px solid #777; }
.pfill { flex: 1; width: 22px; background: #efefef; }
.cb { display: block; width: 14px; height: 14px; box-sizing: border-box; background: #fff; border: 1px solid #888; border-radius: 2px; }
.cb.on { position: relative; background: #55a0f7; border-color: #55a0f7; }
.cb.on::after { content: ""; position: absolute; left: 3px; top: 2px; width: 6px; height: 3px; border-left: 2px solid #fff; border-bottom: 2px solid #fff; transform: rotate(-45deg); }
.cb.off { background: #eee; border-color: #bbb; }

.gutter { position: relative; width: 5px; flex: none; background: #f4f4f4; }
.g2 { width: 4px; }
.handle { position: absolute; left: 1px; top: 371px; width: 4px; height: 103px; background: #5a6068; }
.canvas { position: relative; width: 857px; flex: none; background: #212830; overflow: hidden; }
.cad { display: block; }
.plan * { vector-effect: non-scaling-stroke; }
.dims text { fill: #a8a8a8; font: 7px "Liberation Sans", "Noto Sans CJK SC", sans-serif; letter-spacing: .8px; }
.cadtitle { fill: #8f8f8f; font: 8px "Liberation Sans", "Noto Sans CJK SC", sans-serif; }
.ax { font: 14px "Liberation Sans", sans-serif; }
.ax.z { fill: #0000e0; }
.ax.x { fill: #e00000; }
.viewbar { position: absolute; right: 1px; top: 1px; display: flex; flex-direction: column; align-items: center; width: 32px; height: 226px; background: #9a9da3; box-shadow: inset 0 0 0 1px #b0b3b8; }
.vglobe { margin-top: 11px; }
.v2d { width: 24px; height: 23px; margin-top: 8px; box-sizing: border-box; padding: 9px 2px 0 0; background: #7a8ea8; border: 1px solid #333; color: #222; font-size: 10px; text-align: right; }
.vcube { margin-top: 6px; flex: none; }
.arrow.vdown { margin: 6px 0 0; border-top-color: #333; }
.vsep { width: 24px; height: 1px; margin-top: 5px; background: #666; }
.vgrid { margin-top: 4px; }

.sheets { width: 265px; flex: none; }
.sheet-tools { height: 29px; padding-top: 3px; }
.st { display: flex; align-items: center; gap: 6px; color: #555; margin-left: 2px; white-space: nowrap; }
.s1 { width: 86px; }
.s2 { width: 59px; gap: 4px; }
.s3 { width: 51px; gap: 2px; }
.stable { display: grid; grid-template-columns: 126px 41px 42px 1fr; grid-auto-rows: 21px; }
.sc { display: flex; align-items: center; justify-content: center; box-sizing: border-box; border-right: 1px solid #d4d4d4; border-bottom: 1px solid #d4d4d4; }
.shd { background: #eee; color: #555; }
.sc.act { background: #7ab8f8; color: #fff; font-weight: 700; }
.sfill { background: #eee; }
.name { justify-content: flex-start; padding-left: 3px; white-space: nowrap; }
.sc.cur { border: 2px solid #777; }
.pick { background: #cfe5fc; }

.display { width: 270px; flex: none; margin-left: 6px; border-right: 0; }
.dtabs { display: flex; height: 29px; flex: none; box-sizing: border-box; background: #eee; border-bottom: 1px solid #ccc; padding-top: 4px; }
.dtab { display: flex; align-items: center; justify-content: center; width: 60px; background: #fff; border: 1px solid #ddd; border-bottom: 0; border-radius: 3px 3px 0 0; color: #3d8fe0; }
.dframe { position: relative; margin-top: 2px; width: 266px; height: 739px; box-sizing: border-box; padding: 1px; border: 1px solid #ccc; flex: none; }
.dgrid { display: grid; grid-template-columns: 122px 63px 63px; grid-auto-rows: 21px; width: 249px; border-left: 1px solid #d4d4d4; box-sizing: border-box; }
.dc { display: flex; align-items: center; justify-content: center; box-sizing: border-box; border-right: 1px solid #d4d4d4; border-bottom: 1px solid #d4d4d4; }
.dh { height: 20px; margin-bottom: 1px; background: #f7f7f7; color: #444; }
.dc.act { background: #7ab8f8; color: #fff; font-weight: 700; }
.lab { position: relative; justify-content: flex-start; }
.lab.kid { padding-left: 40px; }
.lab.isg { padding-left: 30px; }
.lab::before { content: ""; position: absolute; left: 7px; top: 0; bottom: 0; border-left: 1px solid #e2e2e2; }
.lab.kid::after { content: ""; position: absolute; left: 17px; top: -1px; height: 10px; width: 16px; border-left: 1px solid #ddd; border-bottom: 1px solid #ddd; }
.box { position: absolute; left: 11px; top: 3px; width: 13px; height: 13px; box-sizing: border-box; background: #fff; border: 1px solid #777; border-radius: 2px; }
.box::after { content: ""; position: absolute; left: 3px; top: 5px; width: 5px; height: 1px; background: #444; }
.dscroll { left: 253px; top: 222px; height: 502px; }
.dfoot { display: flex; justify-content: flex-end; padding: 7px 11px 0 0; }
.reset { width: 87px; height: 26px; padding: 0; box-sizing: border-box; background: #fff; border: 1px solid #ccc; border-radius: 3px; color: #333; font: inherit; }

.status { display: flex; align-items: center; gap: 3px; height: 31px; flex: none; background: #dcdcde; color: #555; white-space: nowrap; border-top: 1px solid #c4c4c4; box-sizing: border-box; }
.s-xyz { width: 260px; margin-left: 2px; font-size: 13px; }
.s-h { width: 80px; }
.s-b { width: 101px; }
.s-n { width: 99px; }
.s-hide { width: 100px; }
.sb { display: flex; align-items: center; justify-content: center; height: 25px; padding: 0; box-sizing: border-box; background: #cdcdcd; border: 1px solid #aaa; font: inherit; color: #555; }
.sb.on { background: #fff; border-color: #2b95ff; }
.sb .arrow { margin-left: 4px; }
.sb.txt { width: 60px; }
.plane { display: flex; align-items: center; justify-content: space-between; width: 100px; height: 25px; margin-left: 1px; padding: 0 3px; box-sizing: border-box; background: #fff; border: 1px solid #ccc; color: #222; }
.hint { color: #444; }

.taskbar { position: relative; height: 9px; overflow: hidden; background: #0a0a0a; }
.task-on { position: absolute; left: 198px; top: 0; width: 48px; height: 9px; background: #333; }
.clock { position: absolute; left: 1864px; top: 6px; color: #fff; font-size: 12px; }

.tooltip { position: absolute; left: 1360px; top: 192px; width: 253px; height: 20px; box-sizing: border-box; padding-left: 7px; line-height: 18px; background: #c9c9c9; border: 1px solid #333; color: #111; white-space: nowrap; }
.edge { position: absolute; left: 1920px; width: 8px; }
.e1 { top: 129px; height: 22px; background: #eee; }
.e1 span { display: block; margin: 4px 0 0 2px; height: 14px; background: #1f5fa8; }
.e2 { top: 208px; height: 24px; background: #777; }
.meter { position: absolute; left: 1910px; top: 975px; display: flex; flex-direction: column; gap: 1px; width: 10px; height: 58px; box-sizing: border-box; padding: 14px 2px 0; background: #555e68; border-radius: 3px 0 0 3px; }
.meter i { display: block; height: 2px; }
</style>
